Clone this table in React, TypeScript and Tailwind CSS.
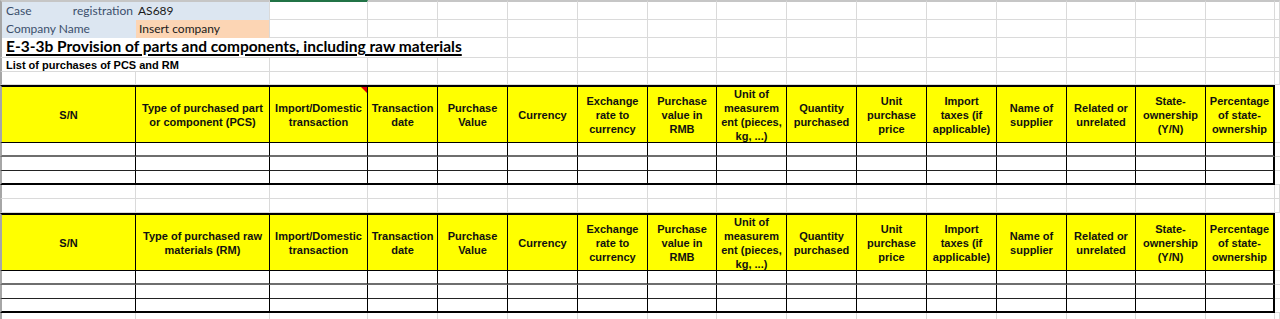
import React from "react";

// sheet column template: A..P + the sliver on the right edge
const GRID =
  "grid grid-cols-[136px_134px_98px_70px_70px_70px_70px_69px_70px_70px_70px_70px_70px_69px_70px_69px_5px]";

const gridLine = "border-r border-b border-[#dadada]";
const frame = "border-l-2 border-l-[#a6a6a6]";

const headersPcs: string[][] = [
    ["S/N"],
    ["Type of purchased part", "or component (PCS)"],
    ["Import/Domestic", "transaction"],
    ["Transaction", "date"],
    ["Purchase", "Value"],
    ["Currency"],
    ["Exchange", "rate to", "currency"],
    ["Purchase", "value in", "RMB"],
    ["Unit of", "measurem", "ent (pieces,", "kg, ...)"],
    ["Quantity", "purchased"],
    ["Unit", "purchase", "price"],
    ["Import", "taxes (if", "applicable)"],
    ["Name of", "supplier"],
    ["Related or", "unrelated"],
    ["State-", "ownership", "(Y/N)"],
    ["Percentage", "of state-", "ownership"],
];

const headersRm: string[][] = headersPcs.map((h, i) =>
    i === 1 ? ["Type of purchased raw", "materials (RM)"] : h
);

const BlankRow = ({ h }: { h: string }) => (
    <div className={`${GRID} ${h}`}>
        {Array.from({ length: 17 }).map((_, i) => (
            <div key={i} className={`${gridLine} ${i === 0 ? frame : ""}`} />
        ))}
    </div>
);

const HeaderRow = ({ headers, comment }: { headers: string[][]; comment?: boolean }) => (
    <div className={`${GRID} h-[58px]`}>
        {headers.map((lines, i) => (
            <div
                key={i}
                className={`relative flex flex-col items-center justify-center border-t-2 border-b border-r border-black bg-[#ffff00] text-center font-['Liberation_Sans',Arial,sans-serif] text-[11px] font-bold leading-[14px] text-[#111] whitespace-nowrap overflow-hidden ${i === 0 ? frame : ""} ${i === 15 ? "border-r-2" : ""}`}
            >
                {lines.map((l, j) => (
                    <span key={j}>{l}</span>
                ))}
                {comment && i === 2 && (
                    <span className="absolute top-0 right-0 h-0 w-0 border-t-[6px] border-l-[6px] border-t-[#e00000] border-l-transparent" />
                )}
            </div>
        ))}
        <div className="border-b border-[#dadada]" />
    </div>
);

const DataRow = ({ bottom }: { bottom: string }) => (
    <div className={`${GRID} h-[14px]`}>
        {Array.from({ length: 16 }).map((_, i) => (
            <div
                key={i}
                className={`border-r border-r-black ${bottom} ${i === 0 ? frame : ""} ${i === 15 ? "border-r-2" : ""}`}
            />
        ))}
        <div className="border-b border-[#dadada]" />
    </div>
);

const Table = ({ headers, comment }: { headers: string[][]; comment?: boolean }) => (
    <>
        <HeaderRow headers={headers} comment={comment} />
        <DataRow bottom="border-b-2 border-b-[#6e6e6e]" />
        <DataRow bottom="border-b border-b-[#222]" />
        <DataRow bottom="border-b-2 border-b-black" />
    </>
);

export default function App() {
    return (
        <div className="w-[1280px] h-[319px] overflow-hidden bg-white font-['Lato','Liberation_Sans',sans-serif]">
            {/* row 1 */}
            <div className={`${GRID} h-[20px]`}>
                <div className={`flex items-center justify-between border-t-2 border-t-[#c6c6c6] bg-[#dce6f1] pl-[4px] pr-[3px] text-[12px] text-[#3b4f6c] ${frame}`}>
                    <span>Case</span>
                    <span>registration</span>
                </div>
                <div className="flex items-center border-t-2 border-t-[#c6c6c6] border-r border-r-[#dadada] bg-[#dce6f1] pl-[2px] text-[12px] text-[#1a1a1a]">
                    AS689
                </div>
                {Array.from({ length: 15 }).map((_, i) => (
                    <div
                        key={i}
                        className={`border-t-2 ${gridLine} ${i === 0 ? "border-t-[#217346]" : "border-t-[#c6c6c6]"}`}
                    />
                ))}
            </div>

            {/* row 2 */}
            <div className={`${GRID} h-[16px]`}>
                <div className={`flex items-center bg-[#dce6f1] pl-[4px] text-[12px] text-[#3b4f6c] ${frame}`}>
                    Company Name
                </div>
                <div className="flex items-center border-r border-r-[#dadada] bg-[#fcd5b4] pl-[3px] text-[12px] text-[#1a1a1a]">
                    Insert company
                </div>
                {Array.from({ length: 15 }).map((_, i) => (
                    <div key={i} className={gridLine} />
                ))}
            </div>

            {/* row 3 - title */}
            <div className={`${GRID} h-[22px]`}>
                <div className={`col-span-5 flex items-end pb-[2px] pl-[4px] ${gridLine} ${frame}`}>
                    <span className="text-[15.5px] font-bold leading-[18px] text-black underline decoration-[1.5px] underline-offset-[2px]">
                        E-3-3b Provision of parts and components, including raw materials
                    </span>
                </div>
                {Array.from({ length: 12 }).map((_, i) => (
                    <div key={i} className={gridLine} />
                ))}
            </div>

            {/* row 4 */}
            <div className={`${GRID} h-[14px]`}>
                <div className={`col-span-2 flex items-center pl-[4px] font-['Liberation_Sans',Arial,sans-serif] text-[11px] font-bold leading-[12px] text-black ${gridLine} ${frame}`}>
                    List of purchases of PCS and RM
                </div>
                {Array.from({ length: 15 }).map((_, i) => (
                    <div key={i} className={gridLine} />
                ))}
            </div>

            {/* row 5 */}
            <BlankRow h="h-[13px]" />

            <Table headers={headersPcs} comment />

            <BlankRow h="h-[14px]" />
            <BlankRow h="h-[14px]" />

            <Table headers={headersRm} />

            <BlankRow h="h-[14px]" />
        </div>
    );
}
